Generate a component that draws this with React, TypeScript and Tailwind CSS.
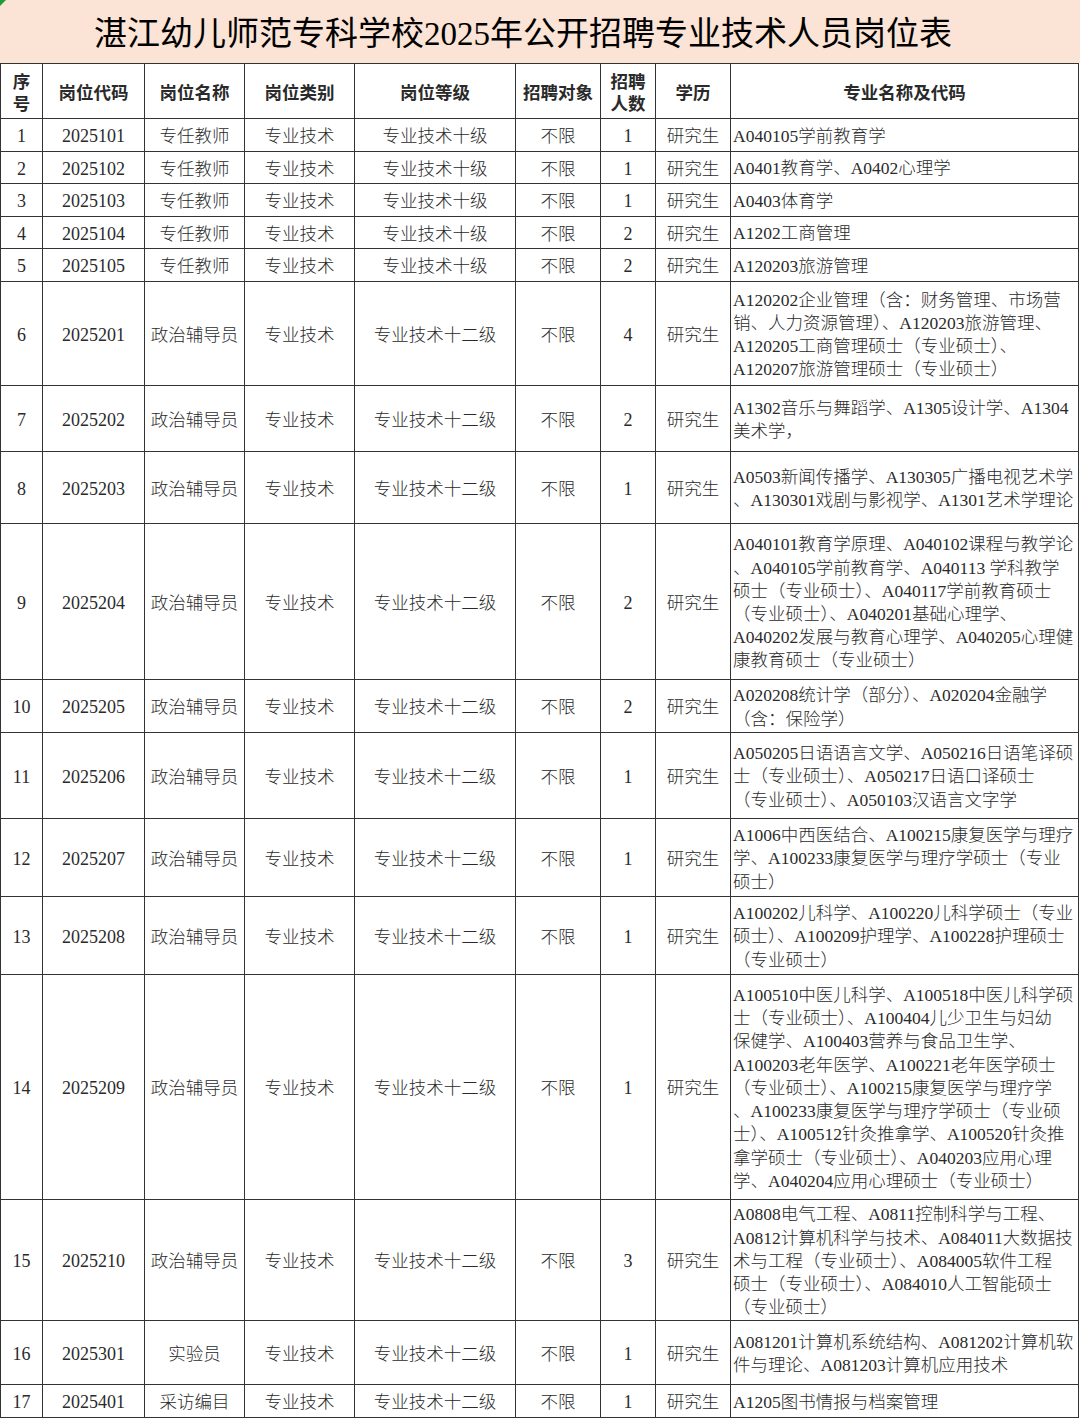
import React from "react";

type Row = {
  no: string;
  code: string;
  name: string;
  cls: string;
  level: string;
  target: string;
  count: string;
  edu: string;
  major: string[];
};

const rows: Row[] = [
  { no: "1", code: "2025101", name: "专任教师", cls: "专业技术", level: "专业技术十级", target: "不限", count: "1", edu: "研究生", major: ["A040105学前教育学"] },
  { no: "2", code: "2025102", name: "专任教师", cls: "专业技术", level: "专业技术十级", target: "不限", count: "1", edu: "研究生", major: ["A0401教育学、A0402心理学"] },
  { no: "3", code: "2025103", name: "专任教师", cls: "专业技术", level: "专业技术十级", target: "不限", count: "1", edu: "研究生", major: ["A0403体育学"] },
  { no: "4", code: "2025104", name: "专任教师", cls: "专业技术", level: "专业技术十级", target: "不限", count: "2", edu: "研究生", major: ["A1202工商管理"] },
  { no: "5", code: "2025105", name: "专任教师", cls: "专业技术", level: "专业技术十级", target: "不限", count: "2", edu: "研究生", major: ["A120203旅游管理"] },
  {
    no: "6", code: "2025201", name: "政治辅导员", cls: "专业技术", level: "专业技术十二级", target: "不限", count: "4", edu: "研究生",
    major: ["A120202企业管理（含：财务管理、市场营", "销、人力资源管理）、A120203旅游管理、", "A120205工商管理硕士（专业硕士）、", "A120207旅游管理硕士（专业硕士）"],
  },
  {
    no: "7", code: "2025202", name: "政治辅导员", cls: "专业技术", level: "专业技术十二级", target: "不限", count: "2", edu: "研究生",
    major: ["A1302音乐与舞蹈学、A1305设计学、A1304", "美术学，"],
  },
  {
    no: "8", code: "2025203", name: "政治辅导员", cls: "专业技术", level: "专业技术十二级", target: "不限", count: "1", edu: "研究生",
    major: ["A0503新闻传播学、A130305广播电视艺术学", "、A130301戏剧与影视学、A1301艺术学理论"],
  },
  {
    no: "9", code: "2025204", name: "政治辅导员", cls: "专业技术", level: "专业技术十二级", target: "不限", count: "2", edu: "研究生",
    major: [
      "A040101教育学原理、A040102课程与教学论",
      "、A040105学前教育学、A040113 学科教学",
      "硕士（专业硕士）、A040117学前教育硕士",
      "（专业硕士）、A040201基础心理学、",
      "A040202发展与教育心理学、A040205心理健",
      "康教育硕士（专业硕士）",
    ],
  },
  {
    no: "10", code: "2025205", name: "政治辅导员", cls: "专业技术", level: "专业技术十二级", target: "不限", count: "2", edu: "研究生",
    major: ["A020208统计学（部分）、A020204金融学", "（含：保险学）"],
  },
  {
    no: "11", code: "2025206", name: "政治辅导员", cls: "专业技术", level: "专业技术十二级", target: "不限", count: "1", edu: "研究生",
    major: ["A050205日语语言文学、A050216日语笔译硕", "士（专业硕士）、A050217日语口译硕士", "（专业硕士）、A050103汉语言文字学"],
  },
  {
    no: "12", code: "2025207", name: "政治辅导员", cls: "专业技术", level: "专业技术十二级", target: "不限", count: "1", edu: "研究生",
    major: ["A1006中西医结合、A100215康复医学与理疗", "学、A100233康复医学与理疗学硕士（专业", "硕士）"],
  },
  {
    no: "13", code: "2025208", name: "政治辅导员", cls: "专业技术", level: "专业技术十二级", target: "不限", count: "1", edu: "研究生",
    major: ["A100202儿科学、A100220儿科学硕士（专业", "硕士）、A100209护理学、A100228护理硕士", "（专业硕士）"],
  },
  {
    no: "14", code: "2025209", name: "政治辅导员", cls: "专业技术", level: "专业技术十二级", target: "不限", count: "1", edu: "研究生",
    major: [
      "A100510中医儿科学、A100518中医儿科学硕",
      "士（专业硕士）、A100404儿少卫生与妇幼",
      "保健学、A100403营养与食品卫生学、",
      "A100203老年医学、A100221老年医学硕士",
      "（专业硕士）、A100215康复医学与理疗学",
      "、A100233康复医学与理疗学硕士（专业硕",
      "士）、A100512针灸推拿学、A100520针灸推",
      "拿学硕士（专业硕士）、A040203应用心理",
      "学、A040204应用心理硕士（专业硕士）",
    ],
  },
  {
    no: "15", code: "2025210", name: "政治辅导员", cls: "专业技术", level: "专业技术十二级", target: "不限", count: "3", edu: "研究生",
    major: [
      "A0808电气工程、A0811控制科学与工程、",
      "A0812计算机科学与技术、A084011大数据技",
      "术与工程（专业硕士）、A084005软件工程",
      "硕士（专业硕士）、A084010人工智能硕士",
      "（专业硕士）",
    ],
  },
  {
    no: "16", code: "2025301", name: "实验员", cls: "专业技术", level: "专业技术十二级", target: "不限", count: "1", edu: "研究生",
    major: ["A081201计算机系统结构、A081202计算机软", "件与理论、A081203计算机应用技术"],
  },
  {
    no: "17", code: "2025401", name: "采访编目", cls: "专业技术", level: "专业技术十二级", target: "不限", count: "1", edu: "研究生",
    major: ["A1205图书情报与档案管理"],
  },
];

const cell = "flex items-center justify-center border-r border-b border-[#333] text-center pt-[3px]";
const numCell = "flex items-center justify-center border-r border-b border-[#333] text-center pt-[3px] text-[18px]";
const headCell = "flex items-center justify-center border-r border-b border-[#333] text-center font-bold leading-[22px] pt-[3px]";

export default function App() {
  return (
    <div
      className="w-[1080px] h-[1421px] bg-white text-[#2a2a2a]"
      style={{ fontFamily: '"Liberation Serif", "Noto Sans CJK SC", serif' }}
    >
      <div className="relative h-[63px] bg-[#fbe3d5] flex items-center justify-center pr-[34px] pt-[6px]">
        <span className="absolute left-0 top-0 w-0 h-0 border-t-[6px] border-r-[6px] border-t-[#1f9d3a] border-r-transparent" />
        <h1 className="text-[33px] leading-none text-black font-normal">
          湛江幼儿师范专科学校2025年公开招聘专业技术人员岗位表
        </h1>
      </div>
      <div className="grid grid-cols-[42px_102px_100px_110px_161px_85px_55px_75px_348px] grid-rows-[55px_33px_32px_33px_32px_33px_104px_66px_72px_156px_53px_86px_78px_78px_225px_121px_64px_33px] border-l border-t border-[#333] w-[1079px] text-[17.5px] font-light">
        <div className={headCell}>序<br />号</div>
        <div className={headCell}>岗位代码</div>
        <div className={headCell}>岗位名称</div>
        <div className={headCell}>岗位类别</div>
        <div className={headCell}>岗位等级</div>
        <div className={headCell}>招聘对象</div>
        <div className={headCell}>招聘<br />人数</div>
        <div className={headCell}>学历</div>
        <div className={headCell}>专业名称及代码</div>
        {rows.map((r) => (
          <React.Fragment key={r.no}>
            <div className={numCell}>{r.no}</div>
            <div className={numCell}>{r.code}</div>
            <div className={cell}>{r.name}</div>
            <div className={cell}>{r.cls}</div>
            <div className={cell}>{r.level}</div>
            <div className={cell}>{r.target}</div>
            <div className={numCell}>{r.count}</div>
            <div className={cell}>{r.edu}</div>
            <div className="flex flex-col justify-center border-r border-b border-[#333] pl-[2px] pt-[3px] leading-[23.2px] whitespace-nowrap overflow-hidden">
              {r.major.map((line, i) => (
                <div key={i}>{line}</div>
              ))}
            </div>
          </React.Fragment>
        ))}
      </div>
    </div>
  );
}
